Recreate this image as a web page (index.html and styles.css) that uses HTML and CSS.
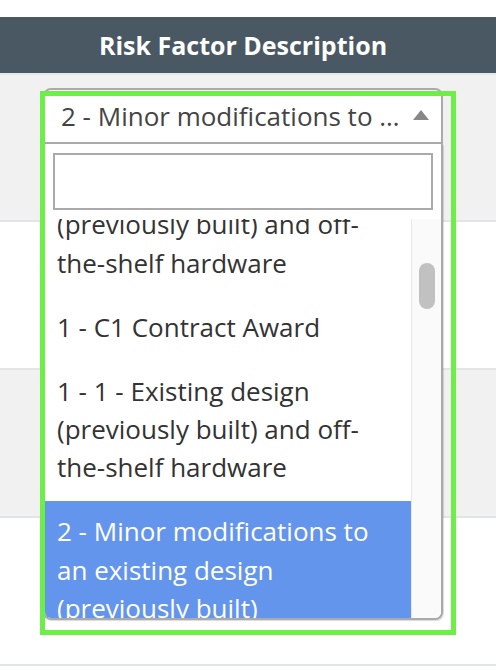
FILE: index.html
```html
<!DOCTYPE html>
<html lang="en">
<head>
<meta charset="utf-8">
<title>Risk Factor Description</title>
<link rel="stylesheet" href="styles.css">
</head>
<body>
<div class="page">
  <div class="head">Risk Factor Description</div>
  <div class="row row-first gray">
    <div class="cell">
      <div class="select">
        <div class="selection">
          <span class="selection-text">2 - Minor modifications to an existing design (previously built) components</span>
          <span class="arrow"></span>
        </div>
        <div class="dropdown">
          <div class="search"><div class="search-field"></div></div>
          <div class="results">
            <div class="options">
              <div class="options-inner">
                <div class="option">1 - Existing design (previously built) and off-the-shelf hardware</div>
                <div class="option">1 - C1 Contract Award</div>
                <div class="option">1 - 1 - Existing design (previously built) and off-the-shelf hardware</div>
                <div class="option highlighted">2 - Minor modifications to an existing design (previously built) components</div>
              </div>
            </div>
            <div class="track"><div class="thumb"></div></div>
          </div>
        </div>
      </div>
    </div>
  </div>
  <div class="row"></div>
  <div class="row gray"></div>
  <div class="row"></div>
</div>
<div class="focus-ring"></div>
</body>
</html>
```
FILE: styles.css
```css
html, body {
  margin: 0;
  padding: 0;
  background: #fff;
  font-family: "Open Sans", "Noto Sans", sans-serif;
  overflow: hidden;
}
.page {
  padding-top: 17px;
}
.head {
  height: 56px;
  line-height: 56px;
  background: #495862;
  color: #fff;
  font-weight: 700;
  font-size: 25px;
  text-align: center;
  padding-right: 10px;
  border-bottom: 2px solid #e4e6e8;
}
.row {
  height: 146px;
  border-bottom: 2px solid #e2e5e8;
  background: #fff;
}
.row.gray {
  background: #f1f1f1;
}
.row.row-first {
  height: 145px;
}
.cell {
  padding: 13px 53px 0 43px;
}
.select {
  position: relative;
  width: 400px;
}
.selection {
  height: 56px;
  box-sizing: border-box;
  border: 2px solid #aaa;
  border-radius: 8px 8px 0 0;
  background: #fff;
  display: flex;
  align-items: center;
  padding: 0 12px 0 16px;
}
.selection-text {
  flex: 1;
  min-width: 0;
  overflow: hidden;
  white-space: nowrap;
  text-overflow: ellipsis;
  font-size: 26px;
  line-height: 52px;
  color: #444;
}
.arrow {
  width: 0;
  height: 0;
  margin-left: 12px;
  border-style: solid;
  border-width: 0 8px 10px 8px;
  border-color: transparent transparent #888 transparent;
  margin-top: -2px;
}
.dropdown {
  position: absolute;
  top: 56px;
  left: 0;
  width: 400px;
  box-sizing: border-box;
  border: 2px solid #aaa;
  border-top: none;
  border-radius: 0 0 8px 8px;
  background: #fff;
  overflow: hidden;
  box-shadow: 1px 1px 1px rgba(0,0,0,0.15);
}
.search {
  padding: 9px 8px;
}
.search-field {
  height: 57px;
  box-sizing: border-box;
  border: 2px solid #aaa;
  background: #fff;
}
.results {
  display: flex;
  height: 399px;
}
.options {
  flex: 1;
  min-width: 0;
  overflow: hidden;
}
.options-inner {
  margin-top: -63.6px;
}
.option {
  padding: 11.4px 12px 14.2px;
  font-size: 26px;
  line-height: 38.4px;
  color: #333;
}
.option.highlighted {
  background: #6495ed;
  color: #fff;
}
.track {
  width: 30px;
  box-sizing: border-box;
  border-left: 1px solid #e8e8e8;
  background: #fafafa;
  padding: 44px 0 0 7px;
}
.thumb {
  width: 16px;
  height: 46px;
  border-radius: 8px;
  background: #c1c1c1;
}
.focus-ring {
  position: absolute;
  left: 40px;
  top: 91px;
  width: 416px;
  height: 544px;
  box-sizing: border-box;
  border: 5px solid #6def48;
  pointer-events: none;
}
```
